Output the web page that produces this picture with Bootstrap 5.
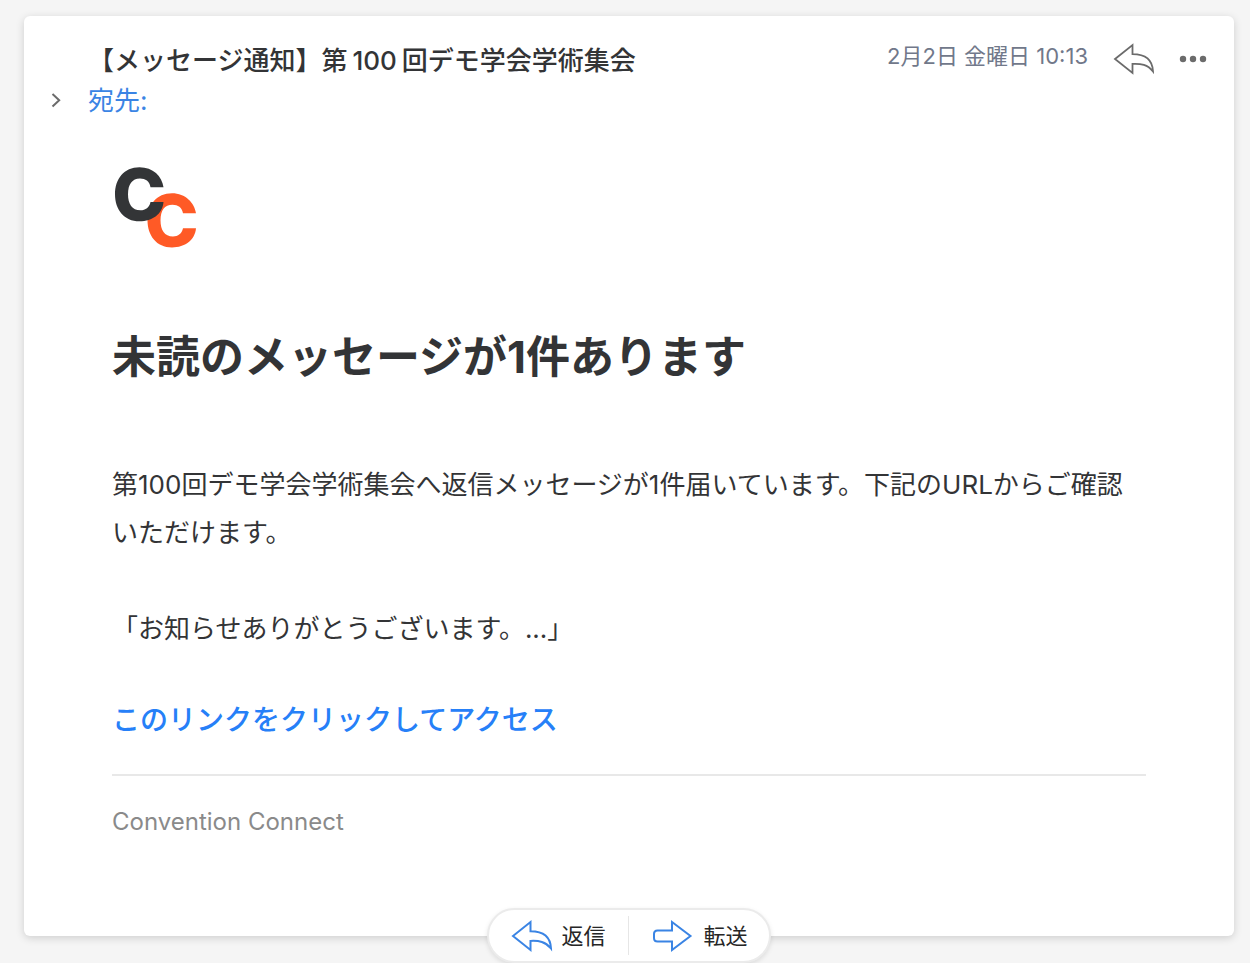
<!DOCTYPE html>
<html lang="ja">
<head>
<meta charset="utf-8">
<meta name="viewport" content="width=device-width, initial-scale=1">
<title>メッセージ通知</title>
<link href="https://cdn.jsdelivr.net/npm/bootstrap@5.3.0/dist/css/bootstrap.min.css" rel="stylesheet">
<style>
body { background: #f5f5f5; color: #333436; font-family: Inter, "Noto Sans CJK JP", sans-serif; font-size: 26px; line-height: 40px; }
.mail-area { padding: 16px 16px 0 24px; }
.mail-card { border-radius: 6px; box-shadow: 0 2px 8px rgba(0,0,0,.16); padding: 24px 24px 94px; }
.subject { font-size: 26px; line-height: 42px; font-weight: 500; }
.subject span { margin: 0 5px; }
.head-grid { display: grid; grid-template-columns: 16px 1fr; column-gap: 24px; }
.date { font-size: 22px; line-height: 32px; color: #71788a; }
.to-link { color: #3a84e4; line-height: 38px; }
.icon-btn { color: #6b6b6b; line-height: 0; }
.more { margin-left: 22px; }
.content { padding: 44px 64px 0; }
.logo { margin: 0 0 65px; }
.headline { font-size: 44px; line-height: 80px; font-weight: 700; margin-bottom: 64px; }
.message { line-height: 48px; margin-bottom: 48px; }
.quote { margin-bottom: 43px; }
.access { font-size: 28px; line-height: 48px; font-weight: 500; color: #2680f8; }
.rule { border-top: 2px solid #e8e8e8; opacity: 1; margin: 30px 0 26px; }
.sender { font-size: 24px; color: #8a8a8a; }
.pill { margin-top: -28px; height: 55px; border: 2px solid #ebebeb; border-radius: 28px; box-shadow: 0 2px 5px rgba(0,0,0,.1); font-size: 22px; padding: 6px 0; }
.pill button { color: #262626; font-size: 22px; line-height: 32px; padding: 0 21px 0 22px; gap: 10px; }
.pill button svg { color: #3a84e4; }
.split { border-left: 1px solid #e6e6e6; margin-left: 1px; }
</style>
</head>
<body>
<main class="mail-area">
  <article class="mail-card bg-white">
    <header class="head-grid">
      <span></span>
      <div class="d-flex justify-content-between">
        <h1 class="subject m-0">【メッセージ通知】第<span>100</span>回デモ学会学術集会</h1>
        <div class="d-flex align-items-start">
          <time class="date" datetime="02-02T10:13">2月2日 金曜日 10:13</time>
          <button class="btn p-0 border-0 icon-btn ms-4" aria-label="返信">
            <svg width="44" height="38" viewBox="0 0 44 38" fill="none" stroke="currentColor" stroke-width="1.8"><path d="M3 19 20.500 5V14.200C33 14.200 40.500 19 41 31.500 35.500 24.500 29 23.500 20.500 23.900V33Z"/></svg>
          </button>
          <button class="btn p-0 border-0 icon-btn more" aria-label="その他">
            <svg width="32" height="38" viewBox="0 0 32 38" fill="currentColor"><circle cx="5" cy="19" r="3.200"/><circle cx="15" cy="19" r="3.200"/><circle cx="25" cy="19" r="3.200"/></svg>
          </button>
        </div>
      </div>
      <button class="btn p-0 border-0 icon-btn" aria-label="詳細を表示">
        <svg width="16" height="20" viewBox="0 0 16 20" fill="none" stroke="currentColor" stroke-width="2"><path d="M4.500 3 11.200 9.200 4.500 15.500"/></svg>
      </button>
      <a class="to-link text-decoration-none" href="#">宛先:</a>
    </header>
    <section class="content">
      <svg class="logo d-block" width="88" height="88" viewBox="0 0 88 88" role="img" aria-label="Convention Connect">
        <path fill="#ff5a26" d="M84 49.300C82.500 39 73.500 29.300 60 29.300 44.500 29.300 35.500 41 35.500 56.300S44.500 83.500 60 83.500C73 83.500 83 76 84 64.300H71C70 69.500 66 72.500 61 72.500 52.500 72.500 48.500 66 48.500 56.300S52.500 40.800 60.500 40.800C66 40.800 70 43.500 71 49.300Z"/>
        <path fill="#333537" d="M51.500 23.300C50 12 41 3.200 27.500 3.200 12 3.200 3 15 3 30.200S12 57.300 27.500 57.300C40.500 57.300 50.500 50 51.500 38H38.500C37.500 43.500 33.500 46.300 28.500 46.300 20 46.300 16 39.800 16 30.200S20 14.600 28 14.600C33.500 14.600 37.500 17.300 38.500 23.300Z"/>
      </svg>
      <h2 class="headline">未読のメッセージが1件あります</h2>
      <p class="message">第100回デモ学会学術集会へ返信メッセージが1件届いています。下記のURLからご確認いただけます。</p>
      <p class="message quote">「お知らせありがとうございます。...」</p>
      <a class="access d-block text-decoration-none" href="#">このリンクをクリックしてアクセス</a>
      <hr class="rule">
      <div class="sender">Convention Connect</div>
    </section>
  </article>
  <div class="d-flex justify-content-center">
    <div class="pill bg-white d-flex position-relative">
      <button class="btn border-0 d-flex align-items-center">
        <svg width="40" height="36" viewBox="1 1 40 36" overflow="visible" fill="none" stroke="currentColor" stroke-width="2"><path d="M3 19 20.500 5V14.200C33 14.200 40.500 19 41 31.500 35.500 24.500 29 23.500 20.500 23.900V33Z"/></svg>返信
      </button>
      <span class="split"></span>
      <button class="btn border-0 d-flex align-items-center">
        <svg width="43" height="36" viewBox="0 0 43 36" fill="none" stroke="currentColor" stroke-width="2"><path d="M21 4 39.500 18 21 32V23.500H6.500Q3 23.500 3 20V16Q3 12.500 6.500 12.500H21Z"/></svg>転送
      </button>
    </div>
  </div>
</main>
<script src="https://cdn.jsdelivr.net/npm/bootstrap@5.3.0/dist/js/bootstrap.bundle.min.js"></script>
</body>
</html>
